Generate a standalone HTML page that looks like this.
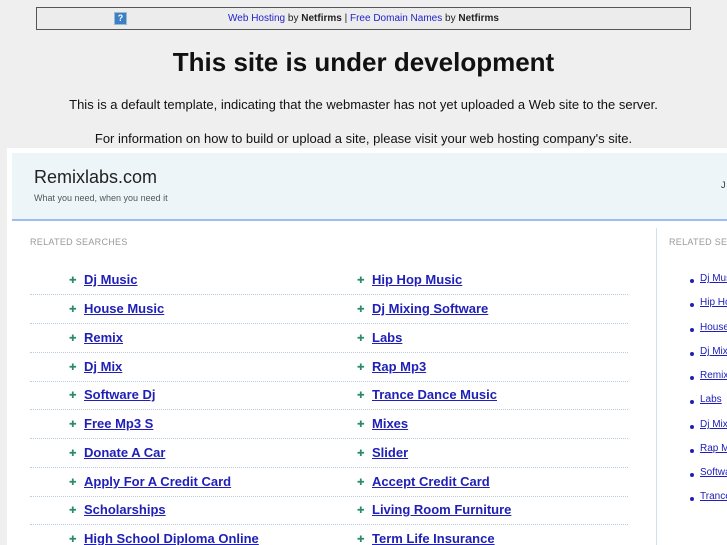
<!DOCTYPE html>
<html><head><meta charset="utf-8"><style>
*{margin:0;padding:0;box-sizing:border-box}
html,body{width:727px;height:545px;overflow:hidden}
body{background:#efefef;font-family:"Liberation Sans",sans-serif;position:relative}
.top{position:absolute;left:36px;top:7px;width:655px;height:23px;border:1px solid #555;background:#ececec;font-size:10px;text-align:center;line-height:21px;color:#222;white-space:nowrap}
.top a{color:#22c}
.q{position:absolute;left:77px;top:4px;width:13px;height:13px;background:#3b7fc4;border:1px solid #9bc;color:#fff;font-size:9px;line-height:11px;text-align:center;font-weight:bold}
h1{position:absolute;left:0;width:727px;top:47px;text-align:center;font-size:26px;color:#111;white-space:nowrap}
.p{position:absolute;left:0;width:727px;text-align:center;font-size:13px;color:#111;white-space:nowrap}
.panel{position:absolute;left:7px;top:148px;width:720px;height:397px;background:#fff}
.hdr{position:absolute;left:12px;top:153px;width:715px;height:68px;background:#eef5f8;border-bottom:2px solid #9bbdf0}
.t1{position:absolute;left:34px;top:167px;font-size:18px;color:#222}
.t2{position:absolute;left:34px;top:193px;font-size:9px;color:#555;white-space:nowrap}
.rs{position:absolute;top:237px;font-size:9px;color:#999;letter-spacing:.3px;white-space:nowrap}
.vl{position:absolute;left:656px;top:228px;width:1px;height:317px;background:#cfe0f5}
.row{position:absolute;left:30px;width:598px;height:29px;border-bottom:1px dotted #bcd}
.l{position:absolute;font-size:13px;font-weight:bold;color:#2020b8;text-decoration:underline;top:0;white-space:nowrap}
.ar{position:absolute;color:#2a8a6a;font-size:9px;top:3px}
.s{position:absolute;left:700px;font-size:10px;color:#2020b8;text-decoration:underline;white-space:nowrap}
.d{position:absolute;left:690px;width:4px;height:4px;border-radius:2px;background:#2020b8}
</style></head><body>
<div class="top"><span class="q">?</span><a>Web Hosting</a> by <b>Netfirms</b> | <a>Free Domain Names</a> by <b>Netfirms</b></div>
<h1>This site is under development</h1>
<div class="p" style="top:97px">This is a default template, indicating that the webmaster has not yet uploaded a Web site to the server.</div>
<div class="p" style="top:131px">For information on how to build or upload a site, please visit your web hosting company's site.</div>
<div class="panel"></div>
<div class="hdr"></div>
<div class="t1">Remixlabs.com</div>
<div class="t2">What you need, when you need it</div>
<div style="position:absolute;left:721px;top:180px;font-size:9px;color:#333">J</div>
<div class="rs" style="left:30px">RELATED SEARCHES</div>
<div class="rs" style="left:669px">RELATED SEARCHES</div>
<div class="vl"></div>
<div class="row" style="top:266px"></div><div class="row" style="top:295px"></div><div class="row" style="top:324px"></div><div class="row" style="top:353px"></div><div class="row" style="top:381px"></div><div class="row" style="top:410px"></div><div class="row" style="top:439px"></div><div class="row" style="top:468px"></div><div class="row" style="top:496px"></div>
<div style="position:absolute;left:0;top:272px"><span class="ar" style="left:69px">✚</span><span class="l" style="left:84px">Dj Music</span><span class="ar" style="left:357px">✚</span><span class="l" style="left:372px">Hip Hop Music</span></div>
<div style="position:absolute;left:0;top:301px"><span class="ar" style="left:69px">✚</span><span class="l" style="left:84px">House Music</span><span class="ar" style="left:357px">✚</span><span class="l" style="left:372px">Dj Mixing Software</span></div>
<div style="position:absolute;left:0;top:330px"><span class="ar" style="left:69px">✚</span><span class="l" style="left:84px">Remix</span><span class="ar" style="left:357px">✚</span><span class="l" style="left:372px">Labs</span></div>
<div style="position:absolute;left:0;top:359px"><span class="ar" style="left:69px">✚</span><span class="l" style="left:84px">Dj Mix</span><span class="ar" style="left:357px">✚</span><span class="l" style="left:372px">Rap Mp3</span></div>
<div style="position:absolute;left:0;top:387px"><span class="ar" style="left:69px">✚</span><span class="l" style="left:84px">Software Dj</span><span class="ar" style="left:357px">✚</span><span class="l" style="left:372px">Trance Dance Music</span></div>
<div style="position:absolute;left:0;top:416px"><span class="ar" style="left:69px">✚</span><span class="l" style="left:84px">Free Mp3 S</span><span class="ar" style="left:357px">✚</span><span class="l" style="left:372px">Mixes</span></div>
<div style="position:absolute;left:0;top:445px"><span class="ar" style="left:69px">✚</span><span class="l" style="left:84px">Donate A Car</span><span class="ar" style="left:357px">✚</span><span class="l" style="left:372px">Slider</span></div>
<div style="position:absolute;left:0;top:474px"><span class="ar" style="left:69px">✚</span><span class="l" style="left:84px">Apply For A Credit Card</span><span class="ar" style="left:357px">✚</span><span class="l" style="left:372px">Accept Credit Card</span></div>
<div style="position:absolute;left:0;top:502px"><span class="ar" style="left:69px">✚</span><span class="l" style="left:84px">Scholarships</span><span class="ar" style="left:357px">✚</span><span class="l" style="left:372px">Living Room Furniture</span></div>
<div style="position:absolute;left:0;top:531px"><span class="ar" style="left:69px">✚</span><span class="l" style="left:84px">High School Diploma Online</span><span class="ar" style="left:357px">✚</span><span class="l" style="left:372px">Term Life Insurance</span></div>
<div class="d" style="top:279px"></div><div class="s" style="top:273px">Dj Music</div>
<div class="d" style="top:303px"></div><div class="s" style="top:297px">Hip Hop Music</div>
<div class="d" style="top:328px"></div><div class="s" style="top:322px">House Music</div>
<div class="d" style="top:352px"></div><div class="s" style="top:346px">Dj Mix</div>
<div class="d" style="top:376px"></div><div class="s" style="top:370px">Remix</div>
<div class="d" style="top:400px"></div><div class="s" style="top:394px">Labs</div>
<div class="d" style="top:425px"></div><div class="s" style="top:419px">Dj Mix</div>
<div class="d" style="top:449px"></div><div class="s" style="top:443px">Rap Mp3</div>
<div class="d" style="top:473px"></div><div class="s" style="top:467px">Software Dj</div>
<div class="d" style="top:497px"></div><div class="s" style="top:491px">Trance Dance</div>
</body></html>
